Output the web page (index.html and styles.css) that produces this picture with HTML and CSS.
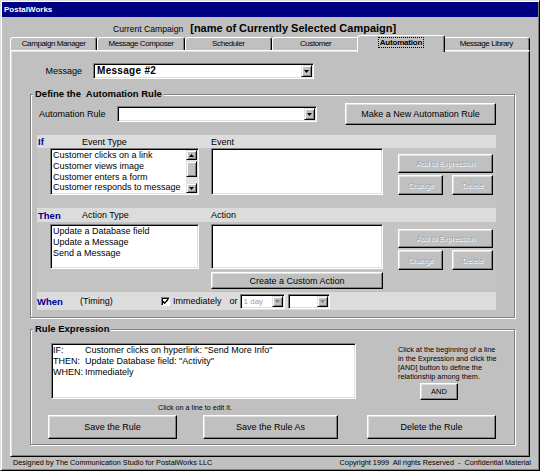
FILE: index.html
```html
<!DOCTYPE html>
<html>
<head>
<meta charset="utf-8">
<title>PostalWorks</title>
<link rel="stylesheet" href="styles.css">
</head>
<body>
<div class="window">
  <div class="titlebar">PostalWorks</div>
  <div class="campaign">
    <span class="campaign-label">Current Campaign</span>
    <span class="campaign-name">[name of Currently Selected Campaign]</span>
  </div>
  <div class="tabs">
    <div class="tab">Campaign Manager</div>
    <div class="tab">Message Composer</div>
    <div class="tab">Scheduler</div>
    <div class="tab">Customer</div>
    <div class="tab tab-active"><span class="focus">Automation</span></div>
    <div class="tab">Message Library</div>
  </div>
  <div class="panel">
    <div class="message-row">
      <span class="message-label">Message</span>
      <div class="combo combo-message">
        <span class="combo-text">Message #2</span>
        <span class="combo-btn"><svg width="5" height="3" viewBox="0 0 5 3"><path d="M0 0H5L2.5 3Z" fill="#000"/></svg></span>
      </div>
    </div>

    <fieldset class="group group-define">
      <legend>Define the&nbsp; Automation Rule</legend>
      <div class="rule-row">
        <span class="rule-label">Automation Rule</span>
        <div class="combo combo-rule">
          <span class="combo-text"></span>
          <span class="combo-btn"><svg width="5" height="3" viewBox="0 0 5 3"><path d="M0 0H5L2.5 3Z" fill="#000"/></svg></span>
        </div>
        <button class="btn btn-new">Make a New Automation Rule</button>
      </div>

      <div class="section">
        <div class="band">
          <span class="band-key">If</span>
          <span class="band-col1">Event Type</span>
          <span class="band-col2">Event</span>
        </div>
        <div class="section-body body-if">
          <div class="list list-type">
            <div class="list-items">
              <div>Customer clicks on a link</div>
              <div>Customer views image</div>
              <div>Customer enters a form</div>
              <div>Customer responds to message</div>
            </div>
            <div class="scrollbar">
              <span class="sb-btn"><svg width="5" height="3" viewBox="0 0 5 3"><path d="M0 3H5L2.5 0Z" fill="#000"/></svg></span>
              <span class="sb-gap"></span>
              <span class="sb-thumb"></span>
              <span class="sb-track"></span>
              <span class="sb-btn"><svg width="5" height="3" viewBox="0 0 5 3"><path d="M0 0H5L2.5 3Z" fill="#000"/></svg></span>
            </div>
          </div>
          <div class="list list-value"></div>
          <div class="actions">
            <button class="btn btn-disabled btn-add">Add to Expression</button>
            <div class="actions-row">
              <button class="btn btn-disabled btn-change">Change</button>
              <button class="btn btn-disabled btn-delete">Delete</button>
            </div>
          </div>
        </div>

        <div class="band band-then">
          <span class="band-key">Then</span>
          <span class="band-col1">Action Type</span>
          <span class="band-col2">Action</span>
        </div>
        <div class="section-body body-then">
          <div class="list list-type">
            <div class="list-items">
              <div>Update a Database field</div>
              <div>Update a Message</div>
              <div>Send a Message</div>
            </div>
          </div>
          <div class="action-col">
            <div class="list list-value list-action"></div>
            <button class="btn btn-custom">Create a Custom Action</button>
          </div>
          <div class="actions actions-then">
            <button class="btn btn-disabled btn-add">Add to Expression</button>
            <div class="actions-row">
              <button class="btn btn-disabled btn-change">Change</button>
              <button class="btn btn-disabled btn-delete">Delete</button>
            </div>
          </div>
        </div>

        <div class="band band-when">
          <span class="band-key when-key">When</span>
          <span class="when-timing">(Timing)</span>
          <span class="checkbox"><svg width="7" height="7" viewBox="0 0 7 7"><path d="M0.8 3.2L2.6 5.2L6.2 1.2" fill="none" stroke="#000" stroke-width="1.4"/></svg></span>
          <span class="when-text">Immediately</span>
          <span class="when-or">or</span>
          <div class="combo combo-day">
            <span class="combo-text combo-disabled">1 day</span>
            <span class="combo-btn"><svg width="5" height="3" viewBox="0 0 5 3"><path d="M0 0H5L2.5 3Z" fill="#808080"/></svg></span>
          </div>
          <div class="combo combo-unit">
            <span class="combo-text"></span>
            <span class="combo-btn"><svg width="5" height="3" viewBox="0 0 5 3"><path d="M0 0H5L2.5 3Z" fill="#808080"/></svg></span>
          </div>
        </div>
      </div>
    </fieldset>

    <fieldset class="group group-expr">
      <legend>Rule Expression</legend>
      <div class="expr-main">
        <div class="expr-left">
          <div class="expr-box">
            <div class="expr-line"><span class="expr-key">IF:</span>Customer clicks on hyperlink: "Send More Info"</div>
            <div class="expr-line"><span class="expr-key">THEN:</span>Update Database field: "Activity"</div>
            <div class="expr-line"><span class="expr-key">WHEN:</span>Immediately</div>
          </div>
          <div class="expr-hint">Click on a line to edit it.</div>
        </div>
        <div class="expr-right">
          <p class="expr-help">Click at the beginning of a line<br>in the Expression and click the<br>[AND] button to define the<br>relationship among them.</p>
          <button class="btn btn-and">AND</button>
        </div>
      </div>
      <div class="expr-buttons">
        <button class="btn btn-big btn-save">Save the Rule</button>
        <button class="btn btn-big btn-saveas">Save the Rule As</button>
        <button class="btn btn-big btn-del">Delete the Rule</button>
      </div>
    </fieldset>
  </div>
  <div class="statusbar">
    <span>Designed by The Communication Studio for PostalWorks LLC</span>
    <span>Copyright 1999&nbsp; All rights Reserved&nbsp; -&nbsp; Confidential Material</span>
  </div>
</div>
</body>
</html>
```

FILE: styles.css
```css
* { box-sizing: border-box; }

body {
  margin: 0;
  background: #c0c0c0;
  font-family: "Liberation Sans", Arial, sans-serif;
  font-size: 9px;
  color: #000;
}

.window {
  width: 540px;
  height: 471px;
  border: 1px solid;
  border-color: #dfdfdf #000 #000 #dfdfdf;
  padding: 1px;
  box-shadow: inset 1px 1px #fff, inset -1px -1px #808080;
  background: #c0c0c0;
  display: flex;
  flex-direction: column;
  overflow: hidden;
}

.titlebar {
  height: 15px;
  flex: none;
  background: #000080;
  color: #fff;
  font-weight: bold;
  font-size: 8px;
  line-height: 15px;
  padding-left: 2px;
}

.campaign {
  height: 18px;
  flex: none;
  padding: 4px 0 0 111px;
  line-height: 14px;
  display: flex;
  align-items: baseline;
}
.campaign-label { font-size: 8.6px; }
.campaign-name { font-size: 11px; font-weight: bold; margin-left: 7px; }

.tabs {
  height: 15px;
  flex: none;
  margin-left: 8px;
  width: 520px;
  display: flex;
  align-items: flex-end;
}
.tab {
  flex: 1;
  height: 13px;
  background: #c0c0c0;
  border: 1px solid;
  border-bottom: none;
  border-color: #fff #000 transparent #fff;
  border-radius: 3px 3px 0 0;
  box-shadow: inset -1px 0 #808080;
  font-size: 8px;
  letter-spacing: -0.4px;
  text-align: center;
  line-height: 11px;
  white-space: nowrap;
}
.tab-active {
  height: 17px;
  margin: 0 -2px -2px;
  position: relative;
  z-index: 1;
  font-weight: bold;
  letter-spacing: -0.2px;
  line-height: 13px;
}
.focus {
  outline: 1px dotted #000;
  padding: 0 1px;
}

.panel {
  flex: none;
  margin-left: 8px;
  width: 520px;
  height: 407px;
  border: 1px solid;
  border-color: #fff #000 #000 #fff;
  box-shadow: inset 1px 1px #dfdfdf, inset -1px -1px #808080;
  padding-top: 12px;
}

/* ---------- generic controls ---------- */
.btn {
  display: block;
  margin: 0;
  padding: 0;
  background: #c0c0c0;
  border: 1px solid;
  border-color: #fff #000 #000 #fff;
  box-shadow: inset -1px -1px #808080, inset 1px 1px #dfdfdf;
  font-family: inherit;
  font-size: 9px;
  color: #000;
  text-align: center;
  white-space: nowrap;
}
.btn-disabled {
  color: #a4a4a4;
  text-shadow: 1px 1px #fff;
  font-size: 7.2px;
}

.combo {
  display: flex;
  height: 16px;
  background: #fff;
  border: 1px solid;
  border-color: #808080 #fff #fff #808080;
  box-shadow: inset 1px 1px #000, inset -1px -1px #dfdfdf;
  padding: 1px;
}
.combo-text {
  flex: 1;
  padding-left: 2px;
  line-height: 12px;
  white-space: nowrap;
  overflow: hidden;
}
.combo-disabled { color: #a0a0a0; font-size: 8px; }
.combo-btn {
  width: 11px;
  flex: none;
  display: flex;
  align-items: center;
  justify-content: center;
  background: #c0c0c0;
  border: 1px solid;
  border-color: #dfdfdf #000 #000 #dfdfdf;
  box-shadow: inset 1px 1px #fff, inset -1px -1px #808080;
}

.list {
  height: 47px;
  background: #fff;
  border: 1px solid;
  border-color: #808080 #fff #fff #808080;
  box-shadow: inset 1px 1px #000, inset -1px -1px #dfdfdf;
  padding: 1px;
  display: flex;
}
.list-items {
  flex: 1;
  padding-left: 1px;
  line-height: 10.8px;
  white-space: nowrap;
  overflow: hidden;
}

/* ---------- message row ---------- */
.message-row {
  display: flex;
  align-items: center;
  height: 16px;
}
.message-label {
  width: 71px;
  text-align: right;
  margin-right: 11px;
  font-size: 9px;
}
.combo-message { width: 221px; }
.combo-message .combo-text {
  font-weight: bold;
  font-size: 10px;
  letter-spacing: 0.3px;
}

/* ---------- group boxes ---------- */
.group {
  margin: 0 0 0 19px;
  width: 485px;
  padding: 0;
  border: 1px solid #808080;
  box-shadow: inset 1px 1px #fff, 1px 1px #fff;
  min-width: 0;
}
.group legend {
  margin-left: 2px;
  padding: 0 2px;
  font-weight: bold;
  font-size: 9.5px;
  line-height: 12px;
  background: #c0c0c0;
}
.group-define { margin-top: 9px; padding-bottom: 7px; }
.group-expr { margin-top: 5px; padding-bottom: 5px; }

.rule-row {
  display: flex;
  align-items: center;
  height: 22px;
  margin-top: 3px;
  padding-left: 8px;
}
.rule-label { width: 78px; }
.combo-rule { width: 200px; }
.btn-new { margin-left: 28px; width: 151px; height: 22px; }

/* ---------- if / then / when ---------- */
.section {
  margin: 10px 0 0 6px;
  width: 459px;
}
.band {
  display: flex;
  align-items: center;
  height: 13px;
  background: #dcdcdc;
}
.band-then { height: 14px; }
.band-key {
  width: 45px;
  padding-left: 1px;
  color: #000090;
  font-weight: bold;
  font-size: 9.5px;
}
.band-col1 { width: 129px; }

.section-body {
  display: flex;
  align-items: flex-start;
  padding-left: 13px;
  background: #c4c4c4;
}
.body-if { height: 60px; }
.body-then { height: 69px; padding-top: 2px; }

.list-type { width: 149px; }
.list-value { width: 172px; margin-left: 12px; }
.action-col { margin-left: 12px; width: 172px; }
.list-action { margin-left: 0; height: 45px; }
.body-then .list-type { height: 45px; }
.btn-custom { width: 172px; height: 17px; margin-top: 3px; }

.scrollbar {
  width: 11px;
  flex: none;
  display: flex;
  flex-direction: column;
  background: #e4e4e4;
}
.sb-btn, .sb-thumb {
  display: flex;
  align-items: center;
  justify-content: center;
  background: #c0c0c0;
  border: 1px solid;
  border-color: #dfdfdf #000 #000 #dfdfdf;
  box-shadow: inset 1px 1px #fff, inset -1px -1px #808080;
}
.sb-btn { height: 10px; }
.sb-gap { height: 1px; }
.sb-thumb { height: 16px; }
.sb-track { flex: 1; }

.actions {
  margin-left: 15px;
  width: 95px;
  padding-top: 6px;
}
.actions-then { padding-top: 5px; }
.btn-add { width: 95px; height: 19px; }
.actions-row {
  display: flex;
  margin-top: 2px;
}
.btn-change { width: 45px; height: 20px; }
.btn-delete { width: 41px; height: 20px; margin-left: 9px; }

.band-when {
  height: 18px;
  margin-top: 1px;
}
.when-key { width: 43px; padding-left: 0; }
.when-timing { width: 81px; }
.checkbox {
  width: 9px;
  height: 9px;
  display: flex;
  align-items: center;
  justify-content: center;
  background: #fff;
  border: 1px solid;
  border-color: #808080 #fff #fff #808080;
  box-shadow: inset 1px 1px #000;
}
.when-text { margin-left: 3px; }
.when-or { margin-left: 8px; }
.combo-day { width: 45px; height: 15px; margin-left: 2px; }
.combo-unit { width: 42px; height: 15px; margin-left: 3px; }
.combo-day .combo-text, .combo-unit .combo-text { line-height: 11px; }

/* ---------- rule expression ---------- */
.expr-main {
  display: flex;
  align-items: flex-start;
  padding-left: 20px;
  margin-top: 8px;
}
.expr-box {
  width: 305px;
  height: 56px;
  background: #fff;
  border: 1px solid;
  border-color: #808080 #fff #fff #808080;
  box-shadow: inset 1px 1px #000, inset -1px -1px #dfdfdf;
  padding: 1px 1px 0 1px;
  line-height: 11px;
  white-space: nowrap;
  overflow: hidden;
}
.expr-key { display: inline-block; width: 32px; }
.expr-hint {
  margin-top: 4px;
  padding-left: 107px;
  font-size: 7.2px;
  line-height: 9px;
}
.expr-right {
  margin-left: 42px;
  width: 100px;
}
.expr-help {
  margin: 2px 0 0;
  font-size: 7.3px;
  line-height: 9px;
  white-space: nowrap;
}
.btn-and {
  margin: 2px 0 0 22px;
  width: 38px;
  height: 17px;
  font-size: 7.5px;
}
.expr-buttons {
  display: flex;
  margin-top: 3px;
  padding-left: 17px;
}
.btn-big { height: 24px; }
.btn-save { width: 129px; }
.btn-saveas { width: 135px; margin-left: 26px; }
.btn-del { width: 129px; margin-left: 29px; }

/* ---------- status bar ---------- */
.statusbar {
  flex: none;
  height: 12px;
  display: flex;
  justify-content: space-between;
  padding: 0 7px 0 11px;
  font-size: 7.3px;
  line-height: 12px;
  white-space: nowrap;
}
```
